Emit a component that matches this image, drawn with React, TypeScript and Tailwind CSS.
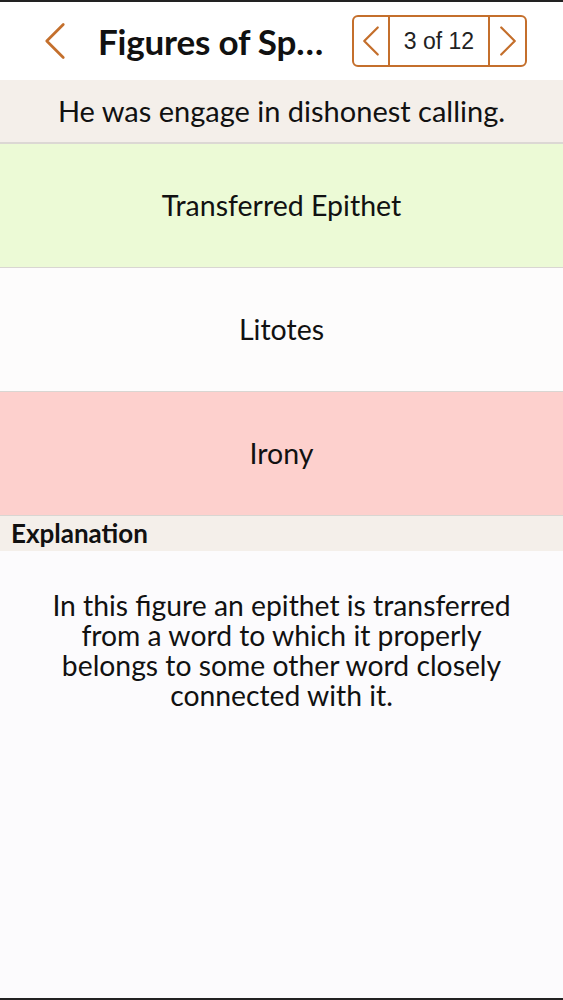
import React from "react";

const body = { fontFamily: '"Lato", "Open Sans", sans-serif' };

function Chevron({ dir, className, width = 3 }: { dir: "left" | "right"; className?: string; width?: number }) {
  return (
    <svg viewBox="0 0 24 40" className={className} fill="none" stroke="#c46f2c" strokeWidth={width} strokeLinecap="round" strokeLinejoin="round">
      {dir === "left" ? <path d="M21 2 L3 20 L21 38" /> : <path d="M3 2 L21 20 L3 38" />}
    </svg>
  );
}

function Answer({ label, tone }: { label: string; tone: string }) {
  return (
    <div className={`flex h-[124px] items-center justify-center border-b border-[#d9d6d2] text-[28.5px] text-[#111] ${tone}`}>
      {label}
    </div>
  );
}

export default function App() {
  return (
    <div className="flex min-h-[1000px] flex-col bg-[#fcfbfd]" style={body}>
      <div className="h-[2px] bg-[#222]" />

      {/* Header */}
      <header className="flex h-[78px] items-center bg-white">
        <button className="ml-[44px] flex h-[40px] w-[24px] items-center">
          <Chevron dir="left" className="h-[40px] w-[22px]" />
        </button>
        <h1 className="ml-[30px] whitespace-nowrap text-[35px] font-bold tracking-[-0.2px] text-[#111]">Figures of Sp…</h1>
        <div className="ml-auto mr-[36px] flex h-[52px] w-[175px] overflow-hidden rounded-[6px] border-2 border-[#c46f2c]">
          <button className="flex w-[36px] items-center justify-center border-r-2 border-[#c46f2c]">
            <Chevron dir="left" className="h-[38px] w-[18px]" width={3} />
          </button>
          <div
            className="flex flex-1 items-center justify-center text-[23px] text-[#222]"
            style={{ fontFamily: '"Liberation Sans", Arial, sans-serif' }}
          >
            3 of 12
          </div>
          <button className="flex w-[37px] items-center justify-center border-l-2 border-[#c46f2c]">
            <Chevron dir="right" className="h-[38px] w-[18px]" width={3} />
          </button>
        </div>
      </header>

      {/* Question */}
      <div className="flex h-[64px] items-center justify-center border-b-2 border-[#dcd8d4] bg-[#f4efea] text-[29px] text-[#111]">
        He was engage in dishonest calling.
      </div>

      <Answer label="Transferred Epithet" tone="bg-[#ecfad6]" />
      <Answer label="Litotes" tone="bg-[#fdfcfc]" />
      <Answer label="Irony" tone="bg-[#fdd0cd]" />

      {/* Explanation */}
      <div className="flex h-[35px] items-center bg-[#f4efea] pl-[11px] text-[26px] font-bold text-[#111]">
        Explanation
      </div>
      <p className="mx-auto mt-[39px] w-[466px] text-center text-[28.3px] leading-[30px] text-[#111]">
        In this figure an epithet is transferred from a word to which it properly belongs to some other word closely
        connected with it.
      </p>

      <div className="flex-1" />
      <div className="h-[2px] bg-[#222]" />
    </div>
  );
}
